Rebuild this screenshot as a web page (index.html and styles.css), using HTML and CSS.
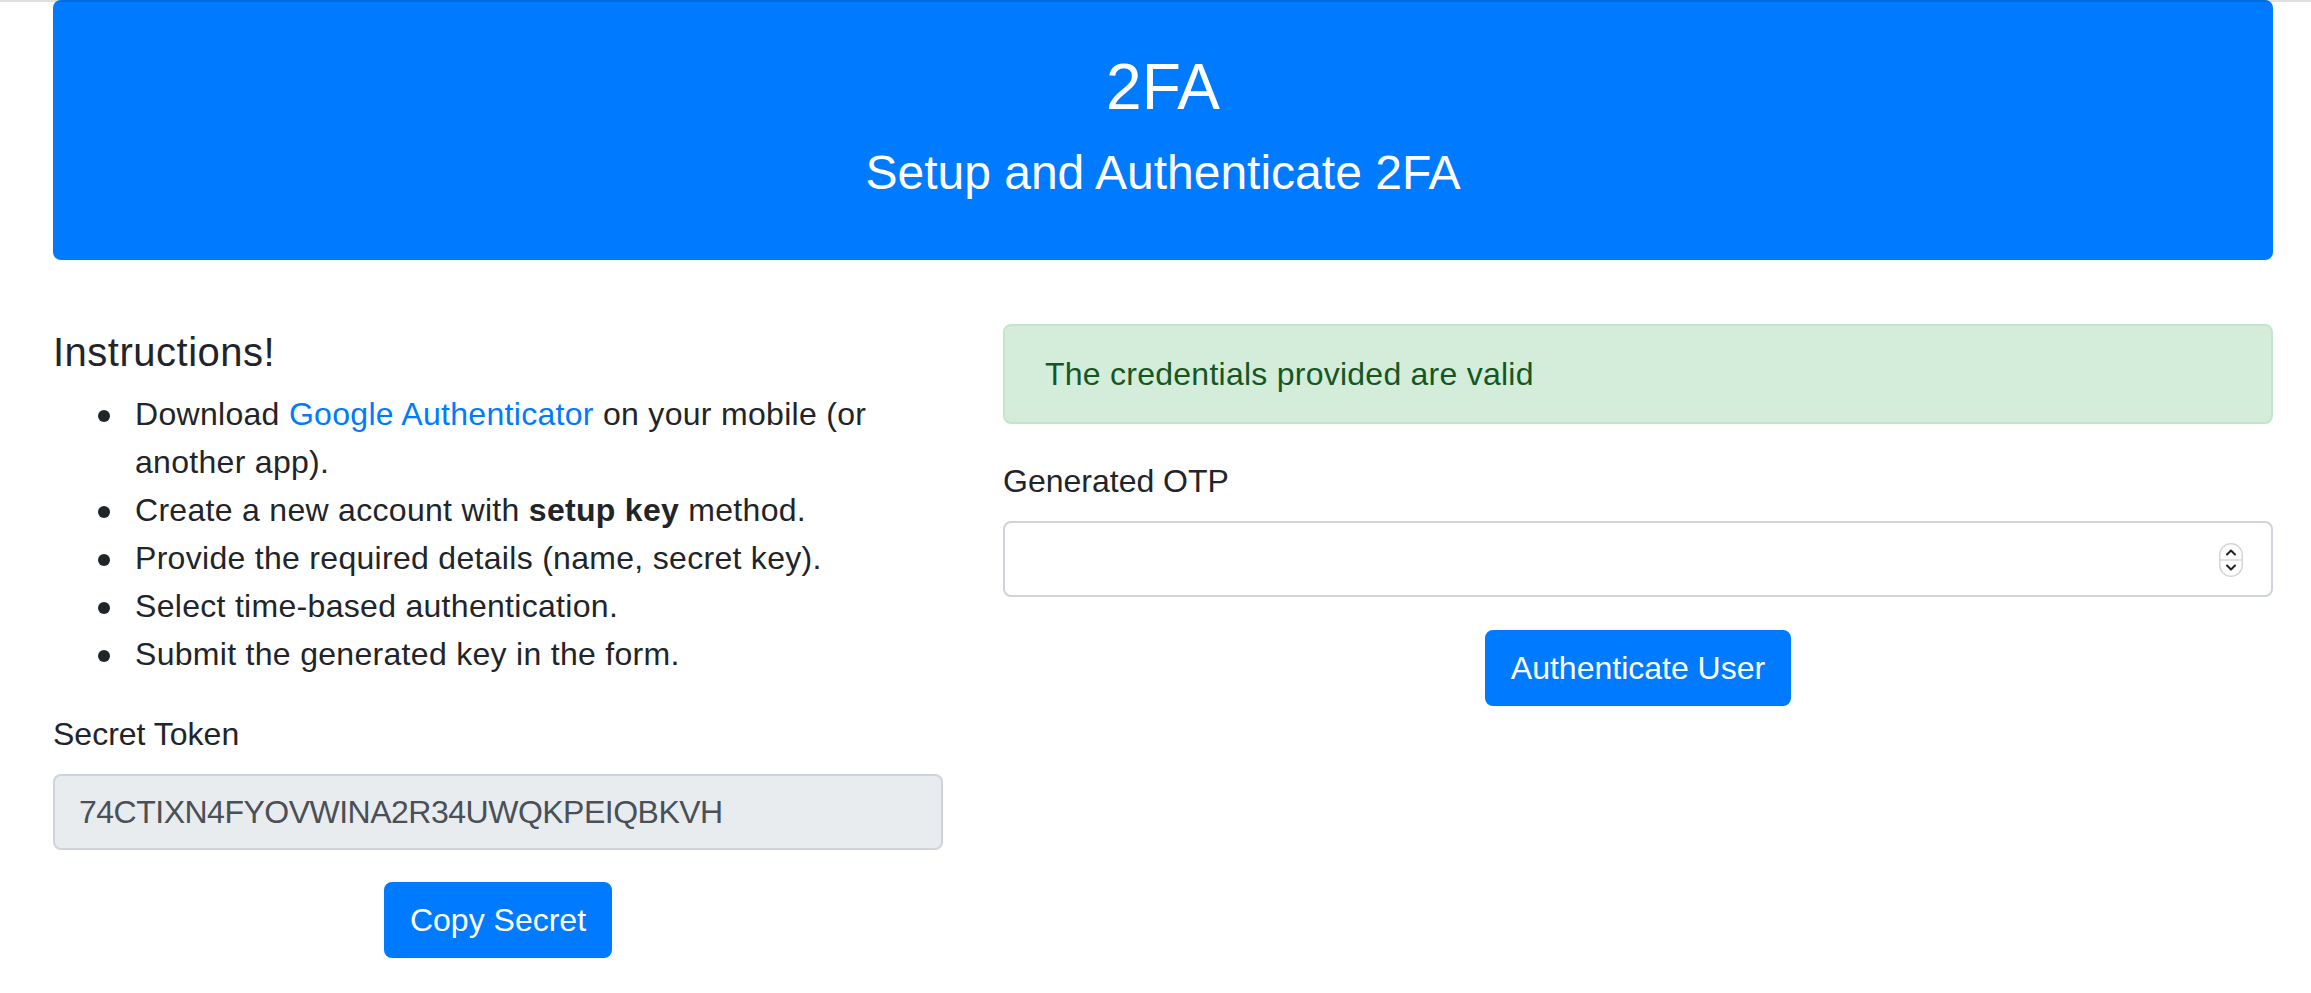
FILE: index.html
```html
<!DOCTYPE html>
<html lang="en">
<head>
<meta charset="utf-8">
<title>2FA</title>
<link rel="stylesheet" href="styles.css">
</head>
<body>
<div class="top-shade"></div>
<div class="container">
  <header class="jumbotron">
    <h2 class="jumbo-title">2FA</h2>
    <h4 class="jumbo-sub">Setup and Authenticate 2FA</h4>
  </header>
  <div class="row">
    <section class="col-left">
      <h5 class="section-title">Instructions!</h5>
      <ul class="steps">
        <li>Download <a class="link" href="#">Google Authenticator</a> on your mobile (or another app).</li>
        <li>Create a new account with <b>setup key</b> method.</li>
        <li>Provide the required details (name, secret key).</li>
        <li>Select time-based authentication.</li>
        <li>Submit the generated key in the form.</li>
      </ul>
      <div class="form-group">
        <label class="form-label" for="secret">Secret Token</label>
        <input class="form-control readonly" id="secret" type="text" value="74CTIXN4FYOVWINA2R34UWQKPEIQBKVH" readonly>
      </div>
      <div class="btn-wrap">
        <button class="btn" type="button">Copy Secret</button>
      </div>
    </section>
    <section class="col-right">
      <div class="alert">The credentials provided are valid</div>
      <div class="form-group">
        <label class="form-label" for="otp">Generated OTP</label>
        <div class="form-control number-field">
          <input class="number-input" id="otp" type="number">
          <span class="spinner">
            <svg width="24" height="34" viewBox="0 0 24 34">
              <rect x="0.75" y="0.75" width="22.5" height="32.5" rx="11" fill="#fff" stroke="#d6d6d6" stroke-width="1.5"/>
              <line x1="1" y1="17" x2="23" y2="17" stroke="#d9d9d9" stroke-width="1.5"/>
              <path d="M8 11.5 L12 7.5 L16 11.5" fill="none" stroke="#222" stroke-width="2" stroke-linecap="round" stroke-linejoin="round"/>
              <path d="M8 22.5 L12 26.5 L16 22.5" fill="none" stroke="#222" stroke-width="2" stroke-linecap="round" stroke-linejoin="round"/>
            </svg>
          </span>
        </div>
      </div>
      <div class="btn-wrap">
        <button class="btn" type="button">Authenticate User</button>
      </div>
    </section>
  </div>
</div>
</body>
</html>
```

FILE: styles.css
```css
* {
  box-sizing: border-box;
}

html, body {
  margin: 0;
  padding: 0;
  background: #fff;
}

body {
  font-family: "Liberation Sans", Arial, sans-serif;
  font-size: 32px;
  line-height: 48px;
  color: #212529;
}

.top-shade {
  position: absolute;
  top: 0;
  left: 0;
  right: 0;
  height: 2px;
  background: rgba(0, 0, 0, 0.12);
}

.container {
  width: 2220px;
  margin-left: 53px;
}

.jumbotron {
  background: #007bff;
  color: #fff;
  border-radius: 8px;
  padding: 49px 64px 58px;
  text-align: center;
  margin-bottom: 64px;
}

.jumbo-title {
  margin: 0 0 18px;
  font-size: 64px;
  line-height: 77px;
  font-weight: 400;
}

.jumbo-sub {
  margin: 0;
  font-size: 48px;
  line-height: 58px;
  font-weight: 400;
}

.row {
  display: grid;
  grid-template-columns: 890px 1270px;
  column-gap: 60px;
}

.section-title {
  margin: 4px 0 14px;
  font-size: 40px;
  line-height: 48px;
  font-weight: 400;
  letter-spacing: 0.5px;
}

.steps {
  margin: 0 0 32px;
  padding-left: 82px;
  list-style: none;
  letter-spacing: 0.3px;
}

.steps li {
  position: relative;
}

.steps li::before {
  content: "";
  position: absolute;
  left: -37px;
  top: 20px;
  width: 12px;
  height: 12px;
  border-radius: 50%;
  background: #212529;
}

.link {
  color: #007bff;
  text-decoration: none;
}

.form-group {
  margin-bottom: 32px;
}

.col-right .form-group {
  margin-bottom: 33px;
}

.form-label {
  display: block;
  margin-bottom: 16px;
}

.form-control {
  display: block;
  width: 100%;
  height: 76px;
  padding: 12px 24px;
  font-family: inherit;
  font-size: 32px;
  line-height: 48px;
  color: #495057;
  background: #fff;
  border: 2px solid #ced4da;
  border-radius: 8px;
  outline: none;
}

.readonly {
  background: #e9ecef;
  letter-spacing: -0.5px;
}

.number-field {
  display: flex;
  align-items: center;
  padding-right: 28px;
}

.number-input {
  flex: 1;
  min-width: 0;
  border: 0;
  outline: none;
  background: transparent;
  font-family: inherit;
  font-size: 32px;
  line-height: 48px;
  color: #495057;
  padding: 0;
  -moz-appearance: textfield;
}

.number-input::-webkit-outer-spin-button,
.number-input::-webkit-inner-spin-button {
  -webkit-appearance: none;
  margin: 0;
}

.spinner {
  display: flex;
  margin-top: 2px;
}

.btn-wrap {
  text-align: center;
}

.btn {
  display: inline-block;
  font-family: inherit;
  font-size: 32px;
  line-height: 48px;
  padding: 12px 24px;
  color: #fff;
  background: #007bff;
  border: 2px solid #007bff;
  border-radius: 8px;
  cursor: pointer;
}

.alert {
  padding: 24px 40px;
  margin-bottom: 33px;
  color: #155724;
  background: #d4edda;
  border: 2px solid #c3e6cb;
  border-radius: 8px;
  letter-spacing: 0.25px;
}
```
